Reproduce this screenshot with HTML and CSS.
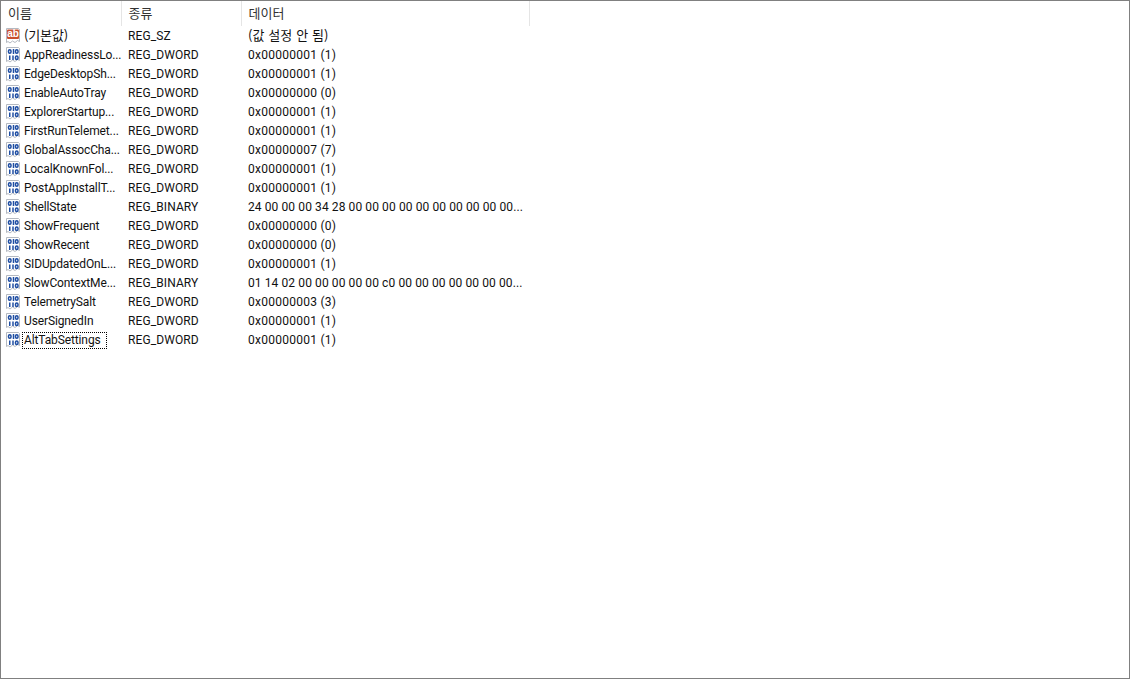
FILE: index.html
```html
<!DOCTYPE html>
<html lang="ko">
<head>
  <meta charset="UTF-8" />
  <title>레지스트리 편집기</title>
  <link rel="stylesheet" href="styles.css">
</head>
<body>
  <svg class="defs" width="0" height="0">
    <symbol id="page" viewBox="0 0 16 16">
      <path d="M1.500 .500H13.500L14.500 1.500V13.500L12.500 12.500 10 14.500 7.500 13 5 15 3 13.500 1.500 14.500Z" fill="#fff" stroke="#b4b9c1"/>
    </symbol>
    <symbol id="icoBin" viewBox="0 0 16 16">
      <use href="#page"/>
      <g fill="none" stroke="#1f4ea3" stroke-width="1.500">
        <rect x="3.500" y="2.750" width="2.500" height="3.500" rx="1.200"/>
        <path d="M8.500 2v5"/>
        <rect x="10.500" y="2.750" width="2.500" height="3.500" rx="1.200"/>
        <path d="M4.750 8.500v4.500"/>
        <path d="M8 8.500v4.500"/>
        <rect x="10.500" y="9" width="2.500" height="3.500" rx="1.200"/>
      </g>
    </symbol>
  </svg>

  <div class="window">
    <table class="values">
      <thead>
        <tr>
          <th class="col-name">이름</th>
          <th class="col-type">종류</th>
          <th class="col-data">데이터</th>
          <th class="col-rest"></th>
        </tr>
      </thead>
      <tbody>
        <tr>
          <td class="name">
            <svg class="ico" viewBox="0 0 16 16">
              <use href="#page"/>
              <rect x="2" y="1.500" width="12" height="9.500" rx="1" fill="#c94f2e"/>
              <text x="8" y="9.300" class="ab-text">ab</text>
            </svg><span class="ko">(기본값)</span>
          </td>
          <td>REG_SZ</td><td><span class="ko">(값 설정 안 됨)</span></td><td></td>
        </tr>
        <tr><td class="name"><svg class="ico"><use href="#icoBin"/></svg>AppReadinessLo...</td><td>REG_DWORD</td><td class="data">0x00000001 (1)</td><td></td></tr>
        <tr><td class="name"><svg class="ico"><use href="#icoBin"/></svg>EdgeDesktopSh...</td><td>REG_DWORD</td><td class="data">0x00000001 (1)</td><td></td></tr>
        <tr><td class="name"><svg class="ico"><use href="#icoBin"/></svg>EnableAutoTray</td><td>REG_DWORD</td><td class="data">0x00000000 (0)</td><td></td></tr>
        <tr><td class="name"><svg class="ico"><use href="#icoBin"/></svg>ExplorerStartup...</td><td>REG_DWORD</td><td class="data">0x00000001 (1)</td><td></td></tr>
        <tr><td class="name"><svg class="ico"><use href="#icoBin"/></svg>FirstRunTelemet...</td><td>REG_DWORD</td><td class="data">0x00000001 (1)</td><td></td></tr>
        <tr><td class="name"><svg class="ico"><use href="#icoBin"/></svg>GlobalAssocCha...</td><td>REG_DWORD</td><td class="data">0x00000007 (7)</td><td></td></tr>
        <tr><td class="name"><svg class="ico"><use href="#icoBin"/></svg>LocalKnownFol...</td><td>REG_DWORD</td><td class="data">0x00000001 (1)</td><td></td></tr>
        <tr><td class="name"><svg class="ico"><use href="#icoBin"/></svg>PostAppInstallT...</td><td>REG_DWORD</td><td class="data">0x00000001 (1)</td><td></td></tr>
        <tr><td class="name"><svg class="ico"><use href="#icoBin"/></svg>ShellState</td><td>REG_BINARY</td><td class="data-bin">24 00 00 00 34 28 00 00 00 00 00 00 00 00 00 00...</td><td></td></tr>
        <tr><td class="name"><svg class="ico"><use href="#icoBin"/></svg>ShowFrequent</td><td>REG_DWORD</td><td class="data">0x00000000 (0)</td><td></td></tr>
        <tr><td class="name"><svg class="ico"><use href="#icoBin"/></svg>ShowRecent</td><td>REG_DWORD</td><td class="data">0x00000000 (0)</td><td></td></tr>
        <tr><td class="name"><svg class="ico"><use href="#icoBin"/></svg>SIDUpdatedOnL...</td><td>REG_DWORD</td><td class="data">0x00000001 (1)</td><td></td></tr>
        <tr><td class="name"><svg class="ico"><use href="#icoBin"/></svg>SlowContextMe...</td><td>REG_BINARY</td><td class="data-bin">01 14 02 00 00 00 00 00 c0 00 00 00 00 00 00 00...</td><td></td></tr>
        <tr><td class="name"><svg class="ico"><use href="#icoBin"/></svg>TelemetrySalt</td><td>REG_DWORD</td><td class="data">0x00000003 (3)</td><td></td></tr>
        <tr><td class="name"><svg class="ico"><use href="#icoBin"/></svg>UserSignedIn</td><td>REG_DWORD</td><td class="data">0x00000001 (1)</td><td></td></tr>
        <tr><td class="name"><svg class="ico"><use href="#icoBin"/></svg><span class="focused">AltTabSettings</span></td><td>REG_DWORD</td><td class="data">0x00000001 (1)</td><td></td></tr>
      </tbody>
    </table>
  </div>
</body>
</html>
```

FILE: styles.css
```css
html, body {
  margin: 0;
  height: 100%;
}
body {
  font-family: Roboto, "Noto Sans CJK KR", sans-serif;
  font-size: 12px;
  color: #111;
  background-color: #fff;
}
.defs {
  display: block;
  height: 0;
}
.ko {
  font-family: "Noto Sans CJK KR", sans-serif;
  font-size: 13px;
  line-height: 13px;
}
.ab-text {
  font-family: "Liberation Sans", sans-serif;
  font-size: 10px;
  font-weight: bold;
  fill: #fff;
  text-anchor: middle;
}
.window {
  box-sizing: border-box;
  height: 679px;
  border: 1px solid #808080;
  overflow: hidden;
}
.values {
  border-collapse: collapse;
  table-layout: fixed;
  width: 1128px;
}
.col-name { width: 120px; }
.col-type { width: 120px; }
.col-data { width: 288px; }
.col-rest { width: 600px; }
th {
  box-sizing: border-box;
  height: 25px;
  padding: 0 0 3px 7px;
  font-family: "Noto Sans CJK KR", sans-serif;
  font-size: 13px;
  font-weight: normal;
  text-align: left;
  color: #333;
  border-right: 1px solid #e5e5e5;
}
th.col-rest {
  border-right: none;
}
td {
  box-sizing: border-box;
  height: 19px;
  padding: 2px 0 0 7px;
  white-space: nowrap;
  overflow: hidden;
  line-height: 17px;
  letter-spacing: 0.100px;
}
td.name {
  padding-left: 4px;
  letter-spacing: -0.120px;
}
.data {
  letter-spacing: 0.250px;
}
.ico {
  width: 16px;
  height: 16px;
  margin-right: 3px;
  vertical-align: -4px;
}
.focused {
  display: inline-block;
  margin-left: -2px;
  padding: 0 6px 0 2px;
  height: 17px;
  outline: 1px dotted #000;
  outline-offset: -1px;
}
```
